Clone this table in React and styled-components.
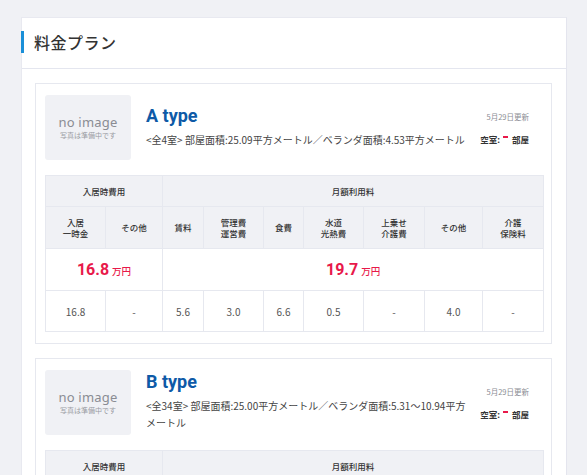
import styled, { createGlobalStyle } from "styled-components"

const GlobalStyle = createGlobalStyle`
    html, body {
        margin: 0;
        padding: 0;
        background-color: #f0f1f5;
        font-family: "Noto Sans CJK JP", "Noto Sans", sans-serif;
        color: #333;
        overflow: hidden;
    }
`

const Page = styled.div`
    padding: 17px 20px 0 21px;
`

const Panel = styled.section`
    background-color: #fff;
    border: 1px solid #e8e9f0;
    border-right-color: #e4e5ee;
    width: 546px;
    box-sizing: border-box;
`

const PanelHeader = styled.div`
    height: 51px;
    display: flex;
    align-items: center;
    border-bottom: 1px solid #e4e6ef;
    box-sizing: border-box;
    h2 {
        margin: -3px 0 0 -1px;
        font-size: 16px;
        font-weight: 500;
        color: #333;
        letter-spacing: 0.5px;
        padding-left: 10px;
        border-left: 3px solid #1a8fd8;
        line-height: 22px;
    }
`

const PanelBody = styled.div`
    padding: 14px 14px 0 13px;
    display: flex;
    flex-direction: column;
    gap: 14px;
`

const Card = styled.article`
    border: 1px solid #e6e8ef;
    padding: 11px 8px 11px 9px;
`

const CardTop = styled.div`
    display: flex;
    align-items: center;
    gap: 6px;
`

const NoImage = styled.div`
    width: 86px;
    height: 65px;
    flex-shrink: 0;
    margin-right: 9px;
    background-color: #f0f1f5;
    border-radius: 3px;
    display: flex;
    flex-direction: column;
    align-items: center;
    justify-content: center;
    color: #8a8c93;
    .big {
        font-family: "Noto Sans", sans-serif;
        font-size: 13px;
        line-height: 15px;
        letter-spacing: 0.2px;
    }
    .small {
        font-size: 7px;
        line-height: 10px;
        color: #9a9ca3;
    }
`

const Info = styled.div`
    flex: 1;
    min-width: 0;
    padding-bottom: 4px;
    h3 {
        margin: 0;
        font-family: "Roboto", "Noto Sans", sans-serif;
        font-size: 18px;
        font-weight: 700;
        line-height: 24px;
        color: #0e5aa7;
    }
    p {
        margin: 3px 0 0;
        font-size: 10px;
        line-height: 17px;
        color: #444;
    }
`

const Side = styled.div`
    width: 50px;
    flex-shrink: 0;
    margin-right: 14px;
    display: flex;
    flex-direction: column;
    align-items: flex-end;
    gap: 10px;
    .date {
        font-size: 7.5px;
        line-height: 12px;
        color: #8a8c93;
        white-space: nowrap;
    }
    .vacancy {
        font-size: 8.5px;
        font-weight: 700;
        line-height: 12px;
        color: #333;
        display: flex;
        align-items: center;
        white-space: nowrap;
    }
`

const Dash = styled.span`
    display: inline-block;
    width: 5px;
    height: 2px;
    background-color: #e8194a;
    margin: 0 4px 3px 3px;
`

const PriceTable = styled.table`
    margin-top: 15px;
    width: 100%;
    border-collapse: collapse;
    table-layout: fixed;
    th, td {
        border: 1px solid #e6e8ef;
        text-align: center;
        padding: 0;
    }
    th {
        background-color: #f0f1f5;
        font-size: 8.5px;
        font-weight: 500;
        color: #333;
        line-height: 11px;
    }
    tr.group th {
        height: 30px;
    }
    tr.labels th {
        height: 41px;
    }
    td {
        font-size: 10px;
        color: #555;
        height: 40px;
    }
`

const Total = styled.td`
    && {
        height: 41px;
        color: #e8194a;
        font-size: 16px;
        font-weight: 700;
        font-family: "Roboto", "Noto Sans", sans-serif;
    }
    small {
        font-family: "Noto Sans CJK JP", sans-serif;
        font-size: 9.5px;
        font-weight: 500;
        margin-left: 3px;
    }
`

const widths = [60, 57, 41, 60, 40, 60, 61, 58, 61]

const labels = [
    ["入居", "一時金"],
    ["その他"],
    ["賃料"],
    ["管理費", "運営費"],
    ["食費"],
    ["水道", "光熱費"],
    ["上乗せ", "介護費"],
    ["その他"],
    ["介護", "保険料"],
]

const plans = [
    {
        name: "A type",
        desc: "<全4室> 部屋面積:25.09平方メートル／ベランダ面積:4.53平方メートル",
        entry: "16.8",
        monthly: "19.7",
        values: ["16.8", "-", "5.6", "3.0", "6.6", "0.5", "-", "4.0", "-"],
    },
    {
        name: "B type",
        desc: "<全34室> 部屋面積:25.00平方メートル／ベランダ面積:5.31〜10.94平方メートル",
        entry: "16.8",
        monthly: "19.7",
        values: ["16.8", "-", "5.6", "3.0", "6.6", "0.5", "-", "4.0", "-"],
    },
]

const PlanCard = ({ plan }) => (
    <Card>
        <CardTop>
            <NoImage>
                <span className="big">no image</span>
                <span className="small">写真は準備中です</span>
            </NoImage>
            <Info>
                <h3>{plan.name}</h3>
                <p>{plan.desc}</p>
            </Info>
            <Side>
                <span className="date">5月29日更新</span>
                <span className="vacancy">空室:<Dash />部屋</span>
            </Side>
        </CardTop>
        <PriceTable>
            <colgroup>
                {widths.map((w, i) => <col key={i} style={{ width: w }} />)}
            </colgroup>
            <thead>
                <tr className="group">
                    <th colSpan={2}>入居時費用</th>
                    <th colSpan={7}>月額利用料</th>
                </tr>
                <tr className="labels">
                    {labels.map((l, i) => (
                        <th key={i}>{l.map((s, j) => <div key={j}>{s}</div>)}</th>
                    ))}
                </tr>
            </thead>
            <tbody>
                <tr>
                    <Total colSpan={2}>{plan.entry}<small>万円</small></Total>
                    <Total colSpan={7}>{plan.monthly}<small>万円</small></Total>
                </tr>
                <tr>
                    {plan.values.map((v, i) => <td key={i}>{v}</td>)}
                </tr>
            </tbody>
        </PriceTable>
    </Card>
)

const App = () => {
    return (
        <>
            <GlobalStyle />
            <Page>
                <Panel>
                    <PanelHeader>
                        <h2>料金プラン</h2>
                    </PanelHeader>
                    <PanelBody>
                        {plans.map(p => <PlanCard key={p.name} plan={p} />)}
                    </PanelBody>
                </Panel>
            </Page>
        </>
    )
}

export default App
